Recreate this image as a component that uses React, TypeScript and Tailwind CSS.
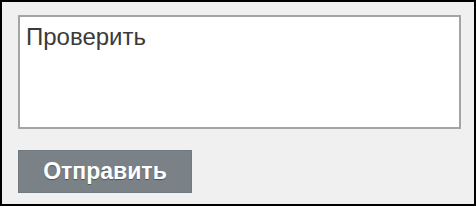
export default function App() {
  return (
    <div className="w-[476px] h-[206px] border-2 border-black bg-[#f0f0f0] pl-4 pt-[13px] font-['Liberation_Sans',Arial,sans-serif]">
      <textarea
        readOnly
        defaultValue="Проверить"
        className="block w-[443px] h-[114px] resize-none border-2 border-[#a4a4a4] bg-white px-[6px] pt-[6px] text-[24px] leading-[28px] text-[#3a3a3a] outline-none"
      />
      <button
        type="button"
        className="mt-[21px] flex h-[43px] w-[174px] items-center justify-center border border-[#727a80] bg-[#7a8288] text-[23px] font-bold text-white [text-shadow:0_1px_1px_rgba(0,0,0,0.35)]"
      >
        Отправить
      </button>
    </div>
  );
}
